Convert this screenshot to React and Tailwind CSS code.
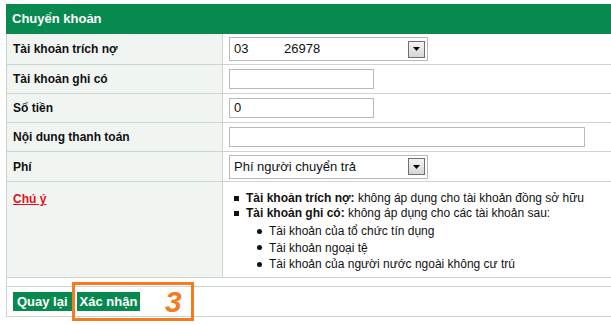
import React from 'react';

const SelectArrow = () => (
  <span className="ml-auto mr-[2px] w-[17px] h-[17px] border border-[#6f6f6f] bg-gradient-to-b from-[#f4f4f4] to-[#d6d6d6] flex items-center justify-center">
    <svg width="7" height="4" viewBox="0 0 7 4"><path d="M0 0h7L3.5 4z" fill="#000" /></svg>
  </span>
);

const Row = ({ label, h, children }) => (
  <div className={`flex border-b border-[#cdd3cf] ${h}`}>
    <div className="w-[216px] shrink-0 bg-[#f0f5f2] border-r border-[#cdd3cf] px-[6px] flex items-center font-bold text-[12px]">{label}</div>
    <div className="flex-1 pl-[6px] flex items-center">{children}</div>
  </div>
);

const Input = ({ w, value = '' }) => (
  <div className={`${w} h-[20px] border border-[#b9b9b9] bg-white px-[4px] flex items-center text-[13px] text-[#111]`}>{value}</div>
);

const App = () => {
  return (
    <div className="w-[611px] h-[325px] bg-white pt-[4px] pl-[6px] text-[#111]" style={{ fontFamily: '"Liberation Sans", Arial, sans-serif' }}>
      <div className="h-[30px] bg-[#07894f] text-white font-bold text-[13px] px-[6px] flex items-center">Chuyển khoản</div>
      <div className="border-l border-[#cdd3cf]">
        <Row label="Tài khoản trích nợ" h="h-[31px]">
          <div className="w-[199px] h-[24px] border border-[#b9b9b9] flex items-center pl-[4px] text-[13px]">
            <span className="w-[50px] shrink-0">03</span>
            <span>26978</span>
            <SelectArrow />
          </div>
        </Row>
        <Row label="Tài khoản ghi có" h="h-[29px]">
          <Input w="w-[145px]" />
        </Row>
        <Row label="Số tiền" h="h-[29px]">
          <Input w="w-[145px]" value="0" />
        </Row>
        <Row label="Nội dung thanh toán" h="h-[29px]">
          <Input w="w-[356px]" />
        </Row>
        <Row label="Phí" h="h-[30px]">
          <div className="w-[199px] h-[24px] border border-[#b9b9b9] flex items-center pl-[4px] text-[13px]">
            <span>Phí người chuyển trả</span>
            <SelectArrow />
          </div>
        </Row>
        <div className="flex border-b border-[#cdd3cf] h-[96px]">
          <div className="w-[216px] shrink-0 bg-[#f0f5f2] border-r border-[#cdd3cf] px-[6px] pt-[4px]">
            <span className="text-[#e0101a] font-bold text-[12px] underline">Chú ý</span>
          </div>
          <div className="flex-1 pl-[11px] pt-[9px] text-[12px] leading-[15px]">
            <div className="flex items-center gap-[7px]">
              <span className="w-[5px] h-[5px] bg-[#111]" />
              <span><b>Tài khoản trích nợ:</b> không áp dụng cho tài khoản đồng sở hữu</span>
            </div>
            <div className="flex items-center gap-[7px]">
              <span className="w-[5px] h-[5px] bg-[#111]" />
              <span><b>Tài khoản ghi có:</b> không áp dụng cho các tài khoản sau:</span>
            </div>
            <div className="pl-[23px] flex flex-col mt-[2px] leading-[16.5px]">
              {['Tài khoản của tổ chức tín dụng', 'Tài khoản ngoại tệ', 'Tài khoản của người nước ngoài không cư trú'].map((t) => (
                <div key={t} className="flex items-center gap-[7px]">
                  <span className="w-[5px] h-[5px] rounded-full bg-[#111]" />
                  <span>{t}</span>
                </div>
              ))}
            </div>
          </div>
        </div>
        <div className="h-[9px] border-b border-[#cdd3cf]" />
        <div className="h-[30px] border-b border-[#cdd3cf] flex items-center pl-[6px] gap-[5px]">
          <span className="h-[19px] px-[4px] bg-[#07894f] text-white font-bold text-[13px] flex items-center">Quay lại</span>
          <div className="relative">
            <span className="h-[19px] px-[3px] bg-[#07894f] text-white font-bold text-[13px] flex items-center">Xác nhận</span>
            <div className="absolute left-[-5px] top-[-10px] w-[122px] h-[39px] border-[3px] border-[#f47b20] flex items-center justify-end pr-[9px]">
              <span className="text-[#f47b20] font-black italic text-[30px] leading-none">3</span>
            </div>
          </div>
        </div>
      </div>
    </div>
  );
};

export default App;
